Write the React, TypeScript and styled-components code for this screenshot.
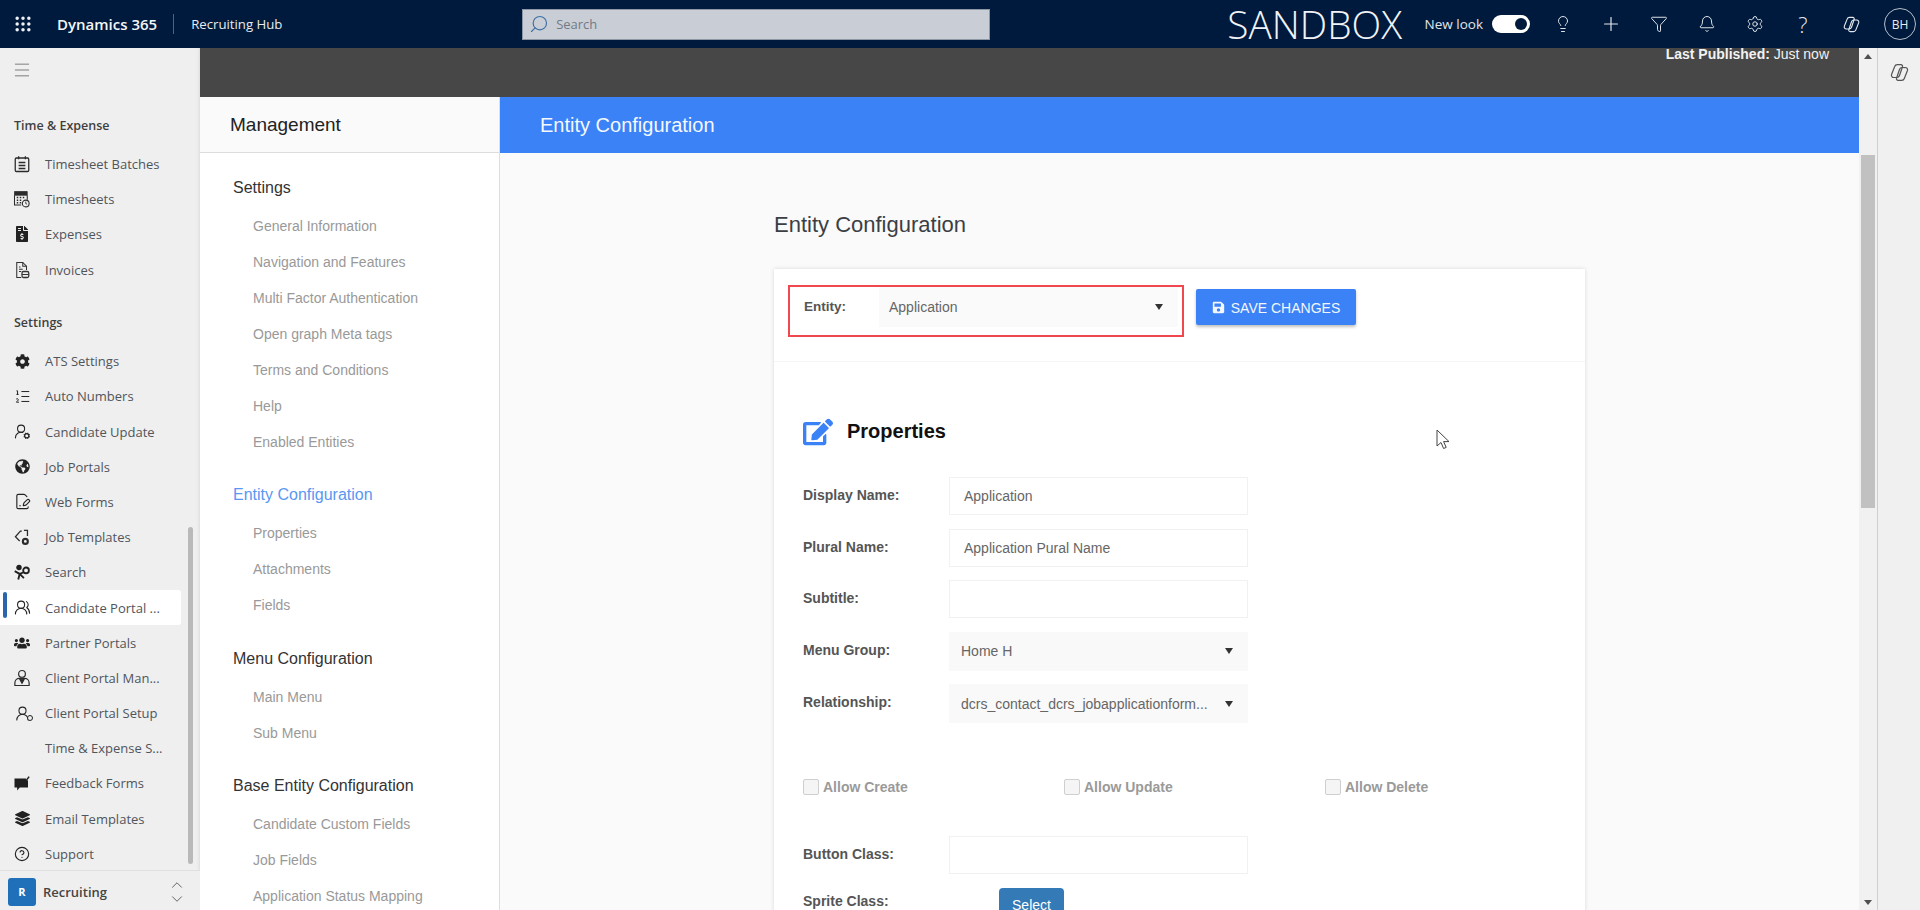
import React from 'react';
import styled, { createGlobalStyle } from 'styled-components';
import {
  Bell,
  ChevronDown,
  ChevronUp,
  CircleHelp,
  FilePenLine,
  Funnel,
  Grip,
  Lightbulb,
  ListOrdered,
  Menu,
  Plus,
  Search as SearchIcon,
  Settings as GearIcon,
  UserRound,
  UserRoundCog,
  UsersRound,
} from 'lucide-react';
import {
  FaCog,
  FaEdit,
  FaFileInvoiceDollar,
  FaGlobeAmericas,
  FaLayerGroup,
  FaSave,
  FaUsers,
} from 'react-icons/fa';

const CopilotIcon: React.FC<{ size: number; color: string }> = ({ size, color }) => (
  <svg width={size} height={size} viewBox="0 0 24 24" fill="none" stroke={color} strokeWidth="1.4" strokeLinejoin="round">
    <path d="M9.5 3h4.2c1.3 0 2.1 1.2 1.7 2.4L12 15.5a3.2 3.2 0 0 1-3 2.2H5.4a2.6 2.6 0 0 1-2.5-3.4L6.5 5.2A3.2 3.2 0 0 1 9.5 3z" />
    <path d="M14.5 21h-4.2c-1.3 0-2.1-1.2-1.7-2.4L12 8.5a3.2 3.2 0 0 1 3-2.2h3.6a2.6 2.6 0 0 1 2.5 3.4l-3.6 9.1a3.2 3.2 0 0 1-3 2.2z" />
  </svg>
);

const BatchIcon: React.FC = () => (
  <svg width="18" height="18" viewBox="0 0 24 24" fill="none" stroke="#2b2b2b" strokeWidth="1.7">
    <rect x="3" y="4" width="18" height="18" rx="1.5" />
    <path d="M7.5 1.5v4M16.5 1.5v4M7.5 10h9M7.5 14h9M7.5 18h9" />
  </svg>
);

const TimesheetIcon: React.FC = () => (
  <svg width="18" height="18" viewBox="0 0 24 24" fill="none" stroke="#2b2b2b">
    <path d="M2 2h17v5H2z" fill="#2b2b2b" />
    <path d="M2 7v13h9M19 7v6" strokeWidth="1.4" />
    <path d="M5 10h2M9 10h2M13 10h2M5 13.5h2M9 13.5h2M5 17h2M9 17h2" strokeWidth="2" />
    <circle cx="17" cy="18" r="4.5" strokeWidth="1.4" fill="#efefef" />
    <path d="M17 15.5V18l1.8 1" strokeWidth="1.2" />
  </svg>
);

const InvoiceIcon: React.FC = () => (
  <svg width="18" height="18" viewBox="0 0 24 24" fill="none" stroke="#333" strokeWidth="1.4">
    <path d="M11 22H5V2h8l5 5v5" />
    <path d="M13 2v5h5M8 11h5M8 14h3M8 8h2" />
    <rect x="12" y="14" width="9" height="8" rx="2" strokeWidth="1.7" />
    <path d="M12 18h9" />
  </svg>
);

const TagGearIcon: React.FC = () => (
  <svg width="17" height="17" viewBox="0 0 24 24" fill="none" stroke="#2b2b2b" strokeWidth="1.8">
    <path d="M11 3H9L2 11l6 6" />
    <path d="M14 2h5v8M15.5 6h.01" />
    <circle cx="16" cy="17.5" r="3.5" strokeWidth="3" />
  </svg>
);

const SearchPeopleIcon: React.FC = () => (
  <svg width="17" height="17" viewBox="0 0 24 24" fill="none" stroke="#1f1f1f" strokeWidth="2.6">
    <circle cx="7" cy="5" r="2.6" fill="#1f1f1f" />
    <circle cx="17" cy="9" r="4" />
    <path d="M1 10l7 4 5-2M8 14l-2 8M8 14l6 6" />
  </svg>
);

const ClientManagerIcon: React.FC = () => (
  <svg width="18" height="18" viewBox="0 0 24 24" fill="none" stroke="#2b2b2b" strokeWidth="1.6">
    <circle cx="12" cy="6.5" r="4.5" />
    <path d="M2.5 22v-3.5A6 6 0 0 1 8.5 12.5h7a6 6 0 0 1 6 6V22z" />
    <path d="M9 13.5h6L12 19z" fill="#2b2b2b" />
  </svg>
);

const FeedbackIcon: React.FC = () => (
  <svg width="18" height="18" viewBox="0 0 24 24" fill="#1f1f1f" stroke="none">
    <path d="M2 6h15l3 3v9H9l-3.5 4v-4H2z" />
    <path d="M18.5 7.5l3-4" stroke="#1f1f1f" strokeWidth="2" />
  </svg>
);

const ClientPortalSetupIcon: React.FC = () => (
  <IconStack>
    <UserRound size={17} strokeWidth={1.5} />
    <SmallRing />
  </IconStack>
);

type NavEntry = { label: string; icon: React.ReactNode; active?: boolean };

const timeEntries: NavEntry[] = [
  { label: 'Timesheet Batches', icon: <BatchIcon /> },
  { label: 'Timesheets', icon: <TimesheetIcon /> },
  { label: 'Expenses', icon: <FaFileInvoiceDollar size={16} /> },
  { label: 'Invoices', icon: <InvoiceIcon /> },
];

const settingEntries: NavEntry[] = [
  { label: 'ATS Settings', icon: <FaCog size={15} /> },
  { label: 'Auto Numbers', icon: <ListOrdered size={17} strokeWidth={1.4} /> },
  { label: 'Candidate Update', icon: <UserRoundCog size={17} strokeWidth={1.5} /> },
  { label: 'Job Portals', icon: <FaGlobeAmericas size={15} /> },
  { label: 'Web Forms', icon: <FilePenLine size={17} strokeWidth={1.6} /> },
  { label: 'Job Templates', icon: <TagGearIcon /> },
  { label: 'Search', icon: <SearchPeopleIcon /> },
  { label: 'Candidate Portal ...', icon: <UsersRound size={17} strokeWidth={1.5} />, active: true },
  { label: 'Partner Portals', icon: <FaUsers size={16} /> },
  { label: 'Client Portal Man...', icon: <ClientManagerIcon /> },
  { label: 'Client Portal Setup', icon: <ClientPortalSetupIcon /> },
  { label: 'Time & Expense S...', icon: null },
  { label: 'Feedback Forms', icon: <FeedbackIcon /> },
  { label: 'Email Templates', icon: <FaLayerGroup size={15} /> },
  { label: 'Support', icon: <CircleHelp size={16} strokeWidth={1.7} /> },
];

const managementGroups = [
  {
    title: 'Settings',
    items: [
      'General Information',
      'Navigation and Features',
      'Multi Factor Authentication',
      'Open graph Meta tags',
      'Terms and Conditions',
      'Help',
      'Enabled Entities',
    ],
  },
  { title: 'Entity Configuration', active: true, items: ['Properties', 'Attachments', 'Fields'] },
  { title: 'Menu Configuration', items: ['Main Menu', 'Sub Menu'] },
  {
    title: 'Base Entity Configuration',
    items: ['Candidate Custom Fields', 'Job Fields', 'Application Status Mapping'],
  },
];

const renderNavEntries = (entries: NavEntry[]) =>
  entries.map((entry) => (
    <NavItem key={entry.label} $active={entry.active}>
      {entry.active && <ActiveMark />}
      <NavIcon>{entry.icon}</NavIcon>
      <NavLabel>{entry.label}</NavLabel>
    </NavItem>
  ));

const App: React.FC = () => {
  return (
    <Page>
      <GlobalStyle />
      <TopBar>
        <Waffle>
          <Grip size={20} strokeWidth={2.2} />
        </Waffle>
        <BrandName>Dynamics 365</BrandName>
        <BrandDivider />
        <HubName>Recruiting Hub</HubName>
        <SearchBox>
          <SearchGlass>
            <SearchIcon size={20} strokeWidth={1.4} />
          </SearchGlass>
          Search
        </SearchBox>
        <TopRight>
          <Sandbox>SANDBOX</Sandbox>
          <NewLook>New look</NewLook>
          <Toggle />
          <TopIcons>
            <TopIcon><Lightbulb size={18} strokeWidth={1.3} /></TopIcon>
            <TopIcon><Plus size={22} strokeWidth={1.3} /></TopIcon>
            <TopIcon><Funnel size={18} strokeWidth={1.3} /></TopIcon>
            <TopIcon><Bell size={18} strokeWidth={1.3} /></TopIcon>
            <TopIcon><GearIcon size={18} strokeWidth={1.3} /></TopIcon>
            <TopIcon><HelpMark>?</HelpMark></TopIcon>
            <TopIcon><CopilotIcon size={19} color="#e4e8ee" /></TopIcon>
          </TopIcons>
          <Avatar>BH</Avatar>
        </TopRight>
      </TopBar>

      <Body>
        <Sidebar>
          <Hamburger>
            <Menu size={20} strokeWidth={1} />
          </Hamburger>
          <SideHeading>Time &amp; Expense</SideHeading>
          {renderNavEntries(timeEntries)}
          <SideHeading $spaced>Settings</SideHeading>
          {renderNavEntries(settingEntries)}
          <SideScrollThumb />
          <AreaSwitcher>
            <AreaTile>R</AreaTile>
            <AreaName>Recruiting</AreaName>
            <AreaChevrons>
              <ChevronUp size={18} strokeWidth={1.2} />
              <ChevronDown size={18} strokeWidth={1.2} />
            </AreaChevrons>
          </AreaSwitcher>
        </Sidebar>

        <Content>
          <PublishBand>
            <PublishText>
              <strong>Last Published:</strong> Just now
            </PublishText>
          </PublishBand>
          <Split>
            <ManagementNav>
              <ManagementHeader>Management</ManagementHeader>
              <ManagementList>
                {managementGroups.map((group) => (
                  <NavGroup key={group.title}>
                    <GroupTitle $active={group.active}>{group.title}</GroupTitle>
                    {group.items.map((item) => (
                      <GroupItem key={item}>{item}</GroupItem>
                    ))}
                  </NavGroup>
                ))}
              </ManagementList>
            </ManagementNav>

            <Panel>
              <PanelBar>Entity Configuration</PanelBar>
              <PanelBody>
                <PanelHeading>Entity Configuration</PanelHeading>
                <Card>
                  <CardToolbar>
                    <EntityPicker>
                      <EntityLabel>Entity:</EntityLabel>
                      <EntitySelect>
                        Application
                        <Caret />
                      </EntitySelect>
                    </EntityPicker>
                    <SaveButton>
                      <FaSave size={13} />
                      SAVE CHANGES
                    </SaveButton>
                  </CardToolbar>
                  <CardBody>
                    <SectionTitle>
                      <FaEdit size={30} color="#3b82f6" />
                      Properties
                    </SectionTitle>
                    <FormRow>
                      <FieldLabel>Display Name:</FieldLabel>
                      <TextField>Application</TextField>
                    </FormRow>
                    <FormRow>
                      <FieldLabel>Plural Name:</FieldLabel>
                      <TextField>Application Pural Name</TextField>
                    </FormRow>
                    <FormRow>
                      <FieldLabel>Subtitle:</FieldLabel>
                      <TextField />
                    </FormRow>
                    <FormRow>
                      <FieldLabel>Menu Group:</FieldLabel>
                      <SelectField>
                        Home H
                        <Caret />
                      </SelectField>
                    </FormRow>
                    <FormRow>
                      <FieldLabel>Relationship:</FieldLabel>
                      <SelectField>
                        dcrs_contact_dcrs_jobapplicationform...
                        <Caret />
                      </SelectField>
                    </FormRow>
                    <CheckRow>
                      <CheckOption><CheckBox />Allow Create</CheckOption>
                      <CheckOption><CheckBox />Allow Update</CheckOption>
                      <CheckOption><CheckBox />Allow Delete</CheckOption>
                    </CheckRow>
                    <FormRow>
                      <FieldLabel>Button Class:</FieldLabel>
                      <TextField />
                    </FormRow>
                    <FormRow>
                      <FieldLabel $tight>Sprite Class:</FieldLabel>
                      <SelectButton>Select</SelectButton>
                    </FormRow>
                  </CardBody>
                </Card>
              </PanelBody>
            </Panel>
          </Split>
        </Content>

        <PageScrollbar>
          <ScrollArrow $up />
          <PageScrollThumb />
          <ScrollArrow />
        </PageScrollbar>

        <RightRail>
          <CopilotIcon size={21} color="#555" />
        </RightRail>
      </Body>

      <MouseCursor width="14" height="21" viewBox="0 0 14 21">
        <path d="M1 1v16l4-3.5 2.6 6 2.6-1.1-2.6-5.8H13z" fill="#fff" stroke="#444" strokeWidth="1" />
      </MouseCursor>
    </Page>
  );
};

const GlobalStyle = createGlobalStyle`
  html, body {
    margin: 0;
    padding: 0;
    height: 100%;
    overflow: hidden;
    font-family: "Liberation Sans", Arial, sans-serif;
  }
  * {
    box-sizing: border-box;
  }
`;

const Page = styled.div`
  position: relative;
  display: flex;
  flex-direction: column;
  width: 1920px;
  height: 910px;
  overflow: hidden;
`;

const TopBar = styled.header`
  display: flex;
  align-items: center;
  flex: 0 0 48px;
  background: #001a3d;
  color: #fff;
  font-family: "Open Sans", sans-serif;
`;

const Waffle = styled.div`
  display: flex;
  justify-content: center;
  width: 46px;
  color: #eef1f5;
`;

const BrandName = styled.div`
  margin-left: 11px;
  font-size: 15px;
  font-weight: 600;
  color: #f4f6f8;
`;

const BrandDivider = styled.div`
  width: 1px;
  height: 20px;
  margin: 0 17px 0 16px;
  background: #50617c;
`;

const HubName = styled.div`
  width: 331px;
  font-size: 13.2px;
  color: #e8ebf0;
`;

const SearchBox = styled.div`
  display: flex;
  align-items: center;
  gap: 7px;
  width: 468px;
  height: 31px;
  padding-left: 6px;
  background: #c9ced6;
  border: 1px solid #8d96a4;
  font-size: 13px;
  color: #727a85;
`;

const SearchGlass = styled.span`
  display: flex;
  color: #3e6fa3;
  transform: scaleX(-1);
`;

const TopRight = styled.div`
  display: flex;
  align-items: center;
  margin-left: auto;
  padding-right: 4px;
`;

const Sandbox = styled.div`
  margin-right: 22.5px;
  font-family: "Open Sans", sans-serif;
  font-size: 38.8px;
  font-weight: 300;
  color: #f1f3f6;
  line-height: 48px;
`;

const NewLook = styled.div`
  margin-right: 9px;
  font-size: 13.5px;
  color: #e1e5ea;
`;

const Toggle = styled.div`
  position: relative;
  width: 38px;
  height: 18px;
  margin-right: 9px;
  border-radius: 9px;
  background: #fff;

  &::after {
    content: '';
    position: absolute;
    right: 3px;
    top: 3px;
    width: 12px;
    height: 12px;
    border-radius: 50%;
    background: #001a3d;
  }
`;

const TopIcons = styled.div`
  display: flex;
`;

const TopIcon = styled.div`
  display: flex;
  align-items: center;
  justify-content: center;
  width: 48px;
  height: 48px;
  color: #e4e8ee;
`;

const HelpMark = styled.span`
  font-size: 22px;
  font-weight: 300;
`;

const Avatar = styled.div`
  display: flex;
  align-items: center;
  justify-content: center;
  width: 32px;
  height: 32px;
  margin-left: 9px;
  border: 1px solid #b6bec9;
  border-radius: 50%;
  font-size: 12px;
  color: #e8ebf0;
`;

const Body = styled.div`
  display: flex;
  flex: 1;
  min-height: 0;
`;

const Sidebar = styled.nav`
  position: relative;
  flex: 0 0 200px;
  background: #efefef;
  overflow: hidden;
  font-family: "Open Sans", sans-serif;
  box-shadow: inset -3px 0 3px -2px #dcdcdc;
`;

const Hamburger = styled.div`
  display: flex;
  align-items: center;
  height: 40px;
  margin-top: 2px;
  margin-bottom: 17.5px;
  padding-left: 12px;
  color: #666;
`;

const SideHeading = styled.div<{ $spaced?: boolean }>`
  display: flex;
  align-items: center;
  height: 35px;
  margin-top: ${(props) => (props.$spaced ? '17.4px' : '0')};
  margin-bottom: 4px;
  padding-left: 14px;
  font-size: 12.5px;
  font-weight: 600;
  color: #3f3f3f;
`;

const NavItem = styled.div<{ $active?: boolean }>`
  position: relative;
  display: flex;
  align-items: center;
  width: 181px;
  height: 35.2px;
  background: ${(props) => (props.$active ? '#fff' : 'transparent')};
  border-radius: 0 3px 3px 0;
`;

const ActiveMark = styled.span`
  position: absolute;
  left: 3px;
  top: 2px;
  width: 4px;
  height: 26px;
  border-radius: 2px;
  background: #2b66ad;
`;

const NavIcon = styled.span`
  display: flex;
  align-items: center;
  justify-content: center;
  width: 18px;
  margin-left: 13px;
  color: #222;
`;

const IconStack = styled.span`
  position: relative;
  display: flex;
`;

const SmallRing = styled.span`
  position: absolute;
  right: -2px;
  bottom: 1px;
  width: 6px;
  height: 6px;
  border: 1px solid #222;
  border-radius: 50%;
  background: #efefef;
`;

const NavLabel = styled.span`
  margin-left: 14px;
  font-size: 13px;
  color: #50555c;
  white-space: nowrap;
`;

const SideScrollThumb = styled.div`
  position: absolute;
  right: 7px;
  top: 479px;
  width: 5px;
  height: 337px;
  border-radius: 3px;
  background: #b9b9b9;
`;

const AreaSwitcher = styled.div`
  position: absolute;
  left: 0;
  right: 0;
  bottom: 0;
  display: flex;
  align-items: center;
  height: 40px;
  padding: 2px 0 0 8px;
  background: #efefef;
  border-top: 1px solid #e0e0e0;
`;

const AreaTile = styled.div`
  display: flex;
  align-items: center;
  justify-content: center;
  width: 28px;
  height: 28px;
  border-radius: 3px;
  background: #1f70b8;
  color: #fff;
  font-size: 11px;
  font-weight: 700;
`;

const AreaName = styled.div`
  margin-left: 7px;
  font-size: 13px;
  font-weight: 600;
  color: #444;
`;

const AreaChevrons = styled.div`
  display: flex;
  flex-direction: column;
  margin-left: auto;
  margin-right: 14px;
  color: #555;

  svg + svg {
    margin-top: -4px;
  }
`;

const Content = styled.main`
  display: flex;
  flex-direction: column;
  flex: 1;
  min-width: 0;
  background: #fafafa;
`;

const PublishBand = styled.div`
  display: flex;
  justify-content: flex-end;
  flex: 0 0 49px;
  padding-right: 30px;
  background: #474747;
`;

const PublishText = styled.div`
  margin-top: -1px;
  font-size: 14px;
  line-height: 15px;
  color: #f2f2f2;
`;

const Split = styled.div`
  display: flex;
  flex: 1;
  min-height: 0;
`;

const ManagementNav = styled.aside`
  flex: 0 0 300px;
  background: #fff;
  border-right: 1px solid #dedede;
  overflow: hidden;
`;

const ManagementHeader = styled.div`
  display: flex;
  align-items: center;
  height: 56px;
  padding: 1px 0 0 30px;
  background: #fafafa;
  border-bottom: 1px solid #dddddd;
  font-size: 19px;
  color: #222;
`;

const ManagementList = styled.div`
  display: flex;
  flex-direction: column;
  gap: 17.4px;
  padding: 17px 0 0 33px;
`;

const NavGroup = styled.div`
  display: flex;
  flex-direction: column;
`;

const GroupTitle = styled.div<{ $active?: boolean }>`
  display: flex;
  align-items: center;
  height: 36px;
  margin-bottom: 2px;
  font-size: 16px;
  color: ${(props) => (props.$active ? '#5a97f2' : '#333')};
`;

const GroupItem = styled.div`
  display: flex;
  align-items: center;
  height: 36px;
  padding-left: 20px;
  font-size: 14px;
  color: #999;
`;

const Panel = styled.section`
  display: flex;
  flex-direction: column;
  flex: 1;
  min-width: 0;
`;

const PanelBar = styled.div`
  display: flex;
  align-items: center;
  flex: 0 0 56px;
  padding-left: 40px;
  background: #3b82f6;
  font-size: 20px;
  color: #f4f8ff;
`;

const PanelBody = styled.div`
  flex: 1;
  padding-left: 274px;
  overflow: hidden;
`;

const PanelHeading = styled.h1`
  margin: 0;
  padding-top: 59px;
  height: 116px;
  font-size: 22px;
  font-weight: 400;
  line-height: 26px;
  color: #3b3f45;
`;

const Card = styled.div`
  width: 811px;
  background: #fff;
  box-shadow: 0 0 4px rgba(0, 0, 0, 0.14);
`;

const CardToolbar = styled.div`
  display: flex;
  gap: 12px;
  height: 93px;
  padding: 16px 0 0 14px;
  border-bottom: 1px solid #f6f6f6;
`;

const EntityPicker = styled.div`
  display: flex;
  width: 396px;
  height: 52px;
  padding: 0 0 0 14px;
  border: 2px solid #f0484e;
`;

const EntityLabel = styled.div`
  width: 75px;
  padding-top: 12px;
  font-size: 13.5px;
  font-weight: 700;
  color: #555;
`;

const EntitySelect = styled.div`
  position: relative;
  display: flex;
  align-items: center;
  width: 299px;
  height: 40px;
  padding-left: 10px;
  background: #fafafa;
  font-size: 14px;
  color: #666;
`;

const Caret = styled.span`
  position: absolute;
  right: 15px;
  top: 50%;
  margin-top: -3px;
  border-left: 4px solid transparent;
  border-right: 4px solid transparent;
  border-top: 6px solid #333;
`;

const SaveButton = styled.button`
  display: flex;
  align-items: center;
  justify-content: center;
  gap: 6px;
  width: 160px;
  height: 36px;
  margin-top: 4px;
  padding: 1px 0 0;
  background: #3b82f6;
  border: none;
  border-radius: 2px;
  box-shadow: 0 2px 3px rgba(0, 0, 0, 0.25);
  color: #f2f6fd;
  font-family: inherit;
  font-size: 14px;
`;

const CardBody = styled.div`
  padding: 0 0 0 29px;
`;

const SectionTitle = styled.div`
  display: flex;
  align-items: center;
  gap: 14px;
  height: 115px;
  padding-top: 24px;
  font-size: 20px;
  font-weight: 700;
  color: #111;
`;

const FormRow = styled.div`
  display: flex;
  margin-bottom: 13.5px;
`;

const FieldLabel = styled.div<{ $tight?: boolean }>`
  width: 146px;
  padding-top: ${(props) => (props.$tight ? '5px' : '10px')};
  font-size: 14px;
  font-weight: 700;
  color: #555;
`;

const TextField = styled.div`
  display: flex;
  align-items: center;
  width: 299px;
  height: 38px;
  padding-left: 14px;
  background: #fff;
  border: 1px solid #f1f1f1;
  font-size: 14px;
  color: #666;
`;

const SelectField = styled.div`
  position: relative;
  display: flex;
  align-items: center;
  width: 299px;
  height: 39px;
  padding-left: 12px;
  background: #f9f9f9;
  font-size: 14px;
  color: #666;
`;

const CheckRow = styled.div`
  display: grid;
  grid-template-columns: repeat(3, 261px);
  margin-top: 56px;
  margin-bottom: 41px;
`;

const CheckOption = styled.label`
  display: flex;
  align-items: center;
  gap: 4px;
  font-size: 14px;
  font-weight: 700;
  color: #9a9a9a;
`;

const CheckBox = styled.span`
  width: 16px;
  height: 16px;
  background: #f5f5f5;
  border: 1px solid #cfcfcf;
  border-radius: 2px;
`;

const SelectButton = styled.button`
  width: 65px;
  height: 34px;
  margin-left: 50px;
  background: #337ab7;
  border: none;
  border-radius: 4px;
  color: #fff;
  font-family: inherit;
  font-size: 14px;
`;

const PageScrollbar = styled.div`
  display: flex;
  flex-direction: column;
  align-items: center;
  flex: 0 0 18px;
  background: #f1f1f1;
`;

const ScrollArrow = styled.span<{ $up?: boolean }>`
  margin: ${(props) => (props.$up ? '6px 0 0' : 'auto 0 5px')};
  border-left: 4px solid transparent;
  border-right: 4px solid transparent;
  border-bottom: ${(props) => (props.$up ? '5px solid #505050' : 'none')};
  border-top: ${(props) => (props.$up ? 'none' : '5px solid #505050')};
`;

const PageScrollThumb = styled.div`
  width: 14px;
  height: 353px;
  margin-top: 96px;
  background: #c1c1c1;
`;

const RightRail = styled.div`
  display: flex;
  justify-content: center;
  flex: 0 0 43px;
  padding-top: 14px;
  background: #f0f0f0;
  border-left: 1px solid #cfcfcf;
`;

const MouseCursor = styled.svg`
  position: absolute;
  left: 1436px;
  top: 429px;
`;

export default App;
